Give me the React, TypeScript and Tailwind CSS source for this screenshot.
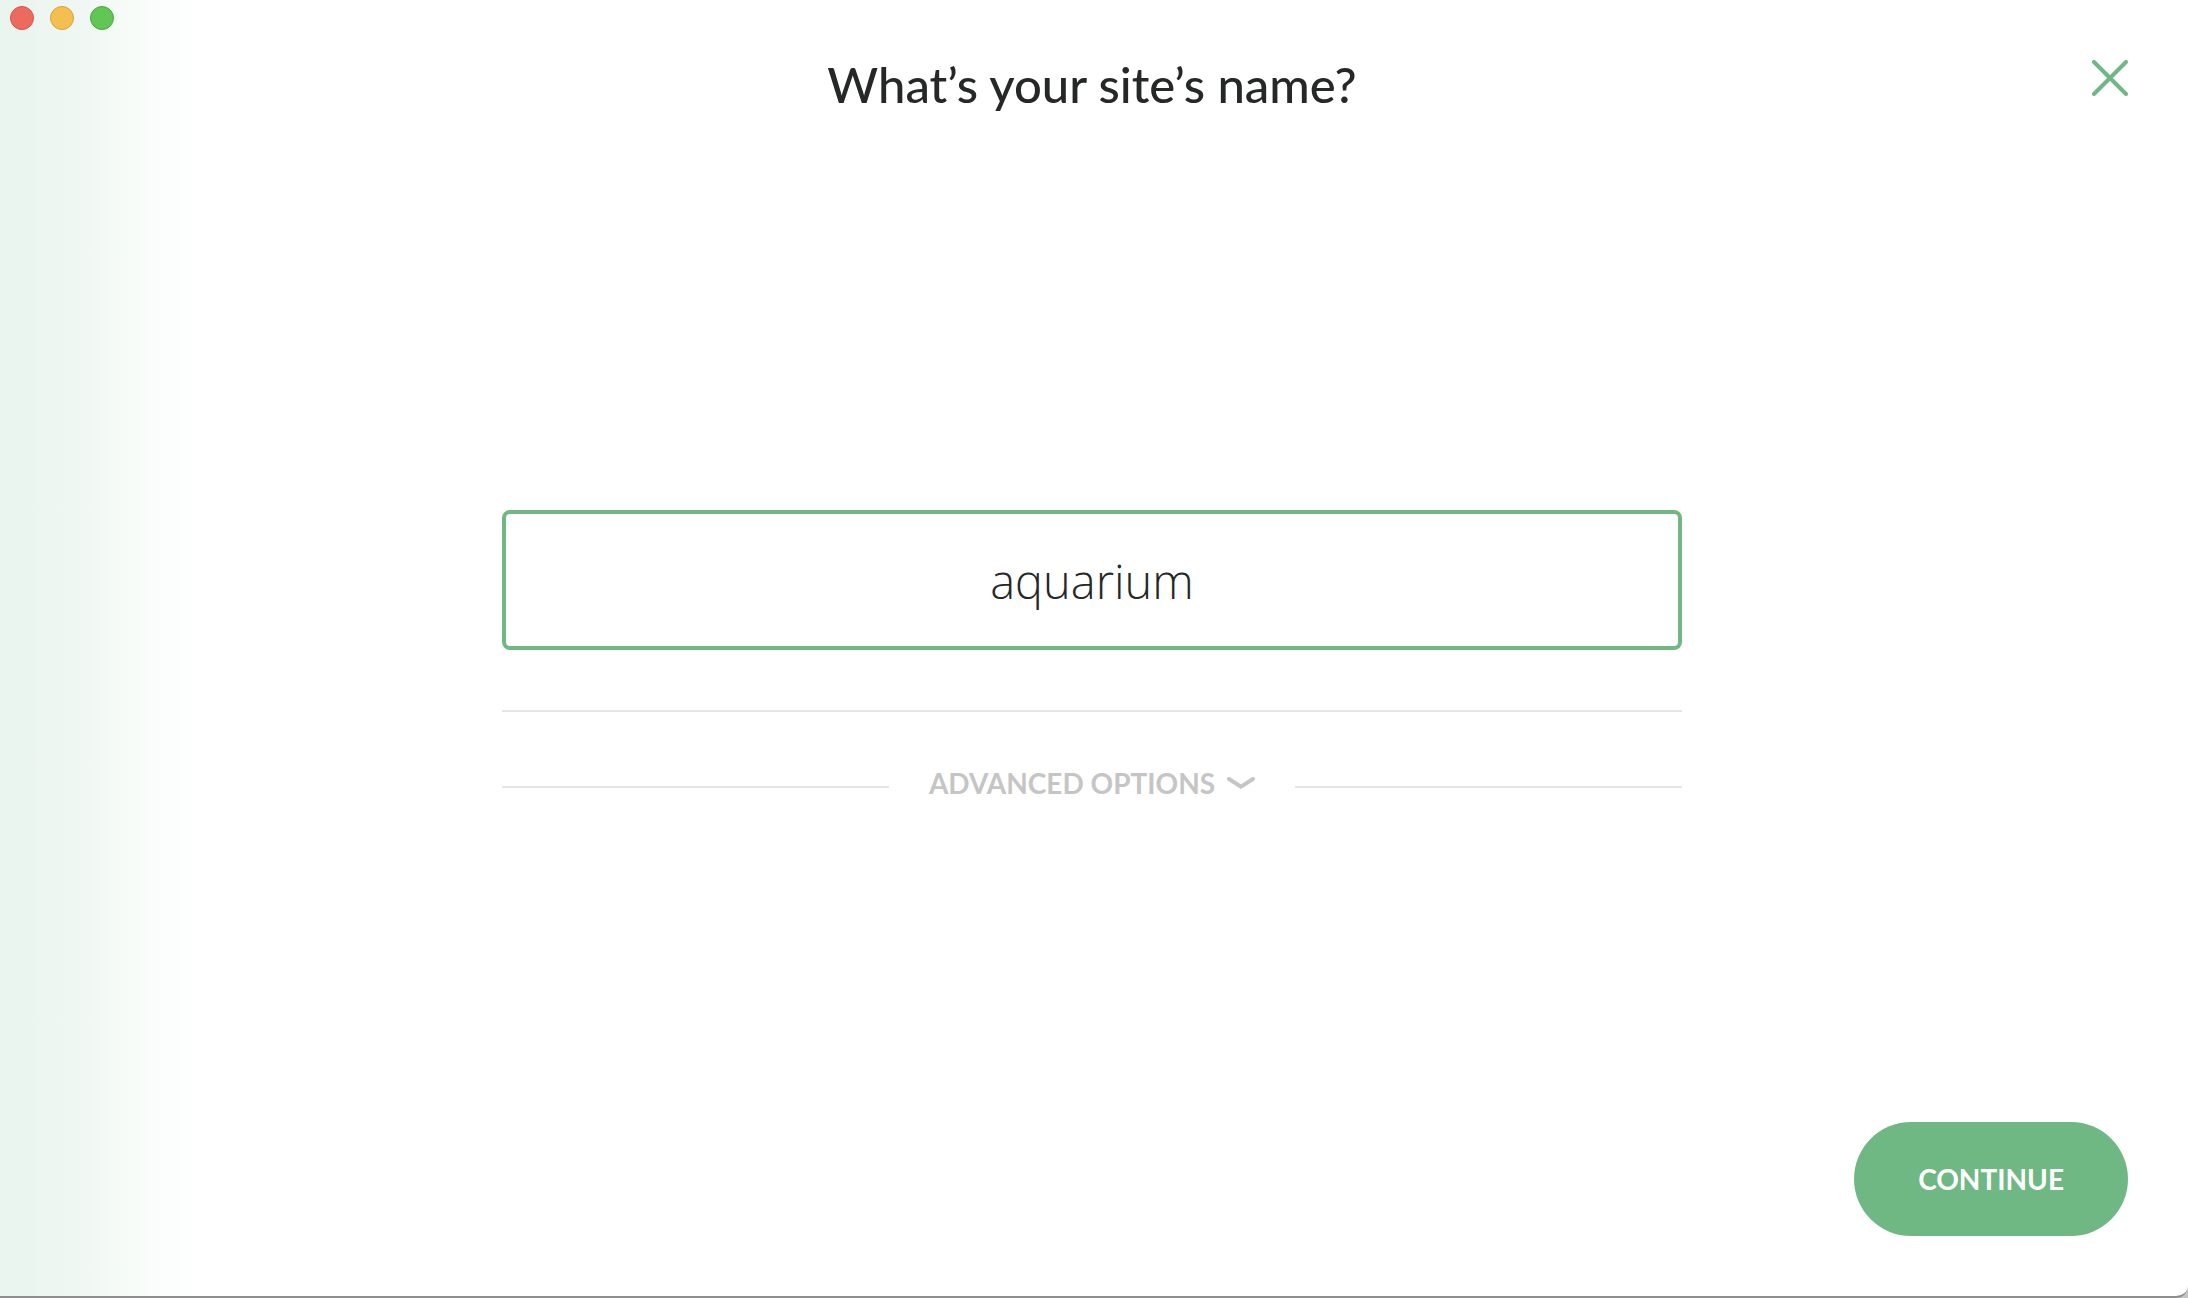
import { useState } from "react";

const windowControls = [
  { label: "Close window", style: "border-[#d9534b] bg-[#ed6a5e]" },
  { label: "Minimize window", style: "border-[#d9a23c] bg-[#f5bf4f]" },
  { label: "Zoom window", style: "border-[#4aa83c] bg-[#61c654]" },
];

function WindowControls() {
  return (
    <div className="absolute top-1.5 left-2.5 flex gap-4">
      {windowControls.map((c) => (
        <button
          key={c.label}
          type="button"
          aria-label={c.label}
          className={`size-6 rounded-full border ${c.style}`}
        />
      ))}
    </div>
  );
}

function CloseIcon() {
  return (
    <svg
      viewBox="0 0 36 36"
      className="size-9"
      fill="none"
      stroke="currentColor"
      strokeWidth="4"
      strokeLinecap="round"
      aria-hidden="true"
    >
      <path d="M2 2 34 34M34 2 2 34" />
    </svg>
  );
}

function ChevronIcon() {
  return (
    <svg
      viewBox="0 0 28 12"
      className="h-3 w-7"
      fill="none"
      stroke="currentColor"
      strokeWidth="4"
      strokeLinecap="round"
      aria-hidden="true"
    >
      <path d="M2 2 14 9.6 26 2" />
    </svg>
  );
}

export default function App() {
  const [name, setName] = useState("aquarium");

  return (
    <div className="min-h-screen bg-[#c4c4c4] font-[Lato,sans-serif] text-[#262727]">
      <div className="relative grid min-h-screen grid-rows-[1fr_auto_1fr] rounded-br-xl border-b-2 border-[#8e8e8e] bg-white bg-[linear-gradient(to_right,#e8f4ed_0px,#eef6f1_60px,#f4faf6_115px,#fafdfb_155px,#ffffff_210px)]">
        <WindowControls />

        <header className="grid grid-cols-[1fr_auto_1fr] items-start px-15 pt-15">
          <h1 className="col-start-2 pr-1 text-[49px] leading-[48px] font-medium">
            What’s your site’s name?
          </h1>
          <button type="button" aria-label="Close" className="justify-self-end text-[#6fb883]">
            <CloseIcon />
          </button>
        </header>

        <form
          id="site-form"
          onSubmit={(e) => e.preventDefault()}
          className="mx-auto w-full max-w-[1184px] pt-[22px] pr-1"
        >
          <input
            aria-label="Site name"
            value={name}
            onChange={(e) => setName(e.target.value)}
            className="block h-[140px] w-full rounded-lg border-4 border-[#6fb883] bg-white pt-0.5 text-center font-['Open_Sans',sans-serif] text-[47px] font-light outline-none"
          />
          <hr className="mt-15 border-t-2 border-[#e6e6e6]" />
          <div className="mt-[53px] flex items-center">
            <span className="h-0.5 flex-1 bg-[#e6e6e6]" />
            <button
              type="button"
              className="flex items-center gap-3 px-10 pb-2 text-[28px] leading-9 font-bold text-[#c6c5c5]"
            >
              ADVANCED OPTIONS
              <ChevronIcon />
            </button>
            <span className="h-0.5 flex-1 bg-[#e6e6e6]" />
          </div>
        </form>

        <footer className="flex items-end justify-end px-15 pb-15">
          <button
            type="submit"
            form="site-form"
            className="rounded-full bg-[#6fb883] px-16 py-9 text-[28px] leading-[42px] font-bold text-white"
          >
            CONTINUE
          </button>
        </footer>
      </div>
    </div>
  );
}
